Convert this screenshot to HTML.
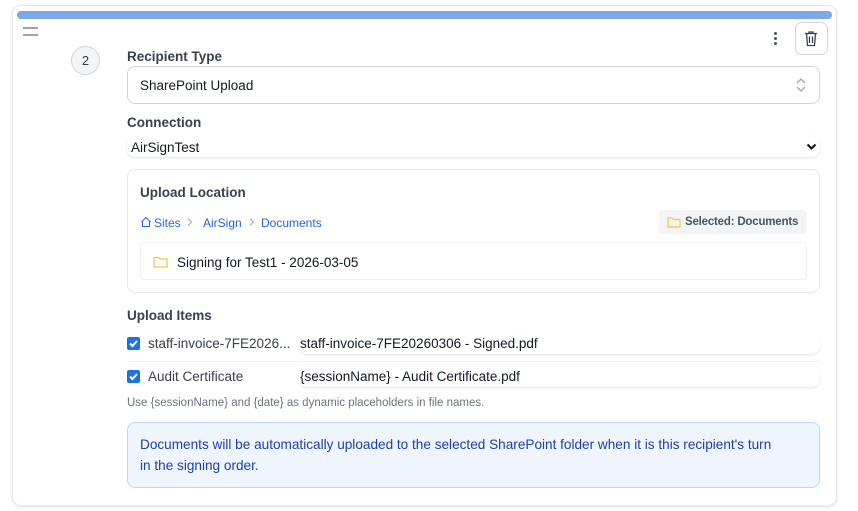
<!DOCTYPE html>
<html><head><meta charset="utf-8"><style>
*{box-sizing:border-box;margin:0;padding:0}
body{width:858px;height:511px;background:#fff;font-family:"Liberation Sans",sans-serif;color:#1f2937;position:relative;overflow:hidden}
.a{position:absolute;white-space:nowrap}
.lbl{font-size:13.5px;font-weight:bold;color:#374151}
.t{font-size:13.5px;color:#111827}
</style></head><body>
<div class="a" style="left:12px;top:5px;width:825px;height:501px;border:1px solid #e5e7eb;border-radius:9px;box-shadow:0 1px 3px rgba(0,0,0,.12)"></div>
<div class="a" style="left:17px;top:11px;width:815px;height:8px;background:#7aaae8;border-radius:4px"></div>
<div class="a" style="left:23px;top:27px;width:15px;height:2px;background:#9ca3af"></div>
<div class="a" style="left:23px;top:34px;width:15px;height:2px;background:#9ca3af"></div>
<div class="a" style="left:71px;top:46px;width:29px;height:29px;border:1px solid #d1d5db;border-radius:50%;background:#f3f4f6;font-size:13px;line-height:27px;text-align:center;color:#374151">2</div>
<div class="a" style="left:774px;top:32px;width:3px;height:3px;background:#4b5563;border-radius:50%;box-shadow:0 5px 0 #4b5563,0 10px 0 #4b5563"></div>
<div class="a" style="left:795px;top:22px;width:33px;height:33px;border:1px solid #d1d5db;border-radius:7px"></div>
<svg class="a" style="left:803px;top:30px" width="16" height="17" viewBox="0 0 16 17" fill="none" stroke="#374151" stroke-width="1.3"><path d="M2 3.5h12M6 3.5V2h4v1.5M3.5 3.5l1 12h7l1-12M6.5 6.5v6.5M9.5 6.5v6.5"/></svg>
<div class="a lbl" style="left:127px;top:49px">Recipient Type</div>
<div class="a" style="left:127px;top:66px;width:693px;height:38px;border:1px solid #d1d5db;border-radius:8px"></div>
<div class="a t" style="left:140px;top:78px">SharePoint Upload</div>
<svg class="a" style="left:795px;top:77px" width="12" height="16" viewBox="0 0 12 16" fill="none" stroke="#9ca3af" stroke-width="1.3"><path d="M2 6l4-4 4 4M2 10l4 4 4-4"/></svg>
<div class="a lbl" style="left:127px;top:115px">Connection</div>
<div class="a" style="left:127px;top:136px;width:693px;height:21px;border-radius:8px;box-shadow:0 1px 2px rgba(0,0,0,.12)"></div>
<div class="a t" style="left:131px;top:140px">AirSignTest</div>
<svg class="a" style="left:806px;top:142px" width="11" height="9" viewBox="0 0 11 9" fill="none" stroke="#111" stroke-width="2"><path d="M1.5 2.5l4 4 4-4"/></svg>
<div class="a" style="left:127px;top:169px;width:693px;height:124px;border:1px solid #e5e7eb;border-radius:8px"></div>
<div class="a lbl" style="left:140px;top:185px">Upload Location</div>
<svg class="a" style="left:140px;top:216px" width="12" height="12" viewBox="0 0 12 12" fill="none" stroke="#2563eb" stroke-width="1"><path d="M1.5 6L6 1.5 10.5 6M2.5 5v5.5h7V5"/></svg>
<div class="a" style="left:154px;top:216px;font-size:12px;color:#2563eb">Sites</div>
<svg class="a" style="left:186px;top:217px" width="7" height="10" viewBox="0 0 7 10" fill="none" stroke="#9ca3af" stroke-width="1"><path d="M2 1.5l3.5 3.5L2 8.5"/></svg>
<div class="a" style="left:203px;top:216px;font-size:12px;color:#2563eb">AirSign</div>
<svg class="a" style="left:248px;top:217px" width="7" height="10" viewBox="0 0 7 10" fill="none" stroke="#9ca3af" stroke-width="1"><path d="M2 1.5l3.5 3.5L2 8.5"/></svg>
<div class="a" style="left:261px;top:216px;font-size:12px;color:#2563eb">Documents</div>
<div class="a" style="left:659px;top:210px;width:148px;height:24px;background:#f3f4f6;border-radius:4px"></div>
<svg class="a" style="left:667px;top:216px" width="14" height="12" viewBox="0 0 14 12" fill="none" stroke="#f5c542" stroke-width="1.2"><path d="M1 2h4l1.5 1.5H13V11H1z"/></svg>
<div class="a" style="left:685px;top:216px;font-size:11.5px;font-weight:bold;color:#4b5563;letter-spacing:-0.2px">Selected: Documents</div>
<div class="a" style="left:140px;top:242px;width:667px;height:38px;border:1px solid #eef0f2;border-radius:4px"></div>
<svg class="a" style="left:153px;top:256px" width="15" height="12" viewBox="0 0 15 12" fill="none" stroke="#f5c542" stroke-width="1.2"><path d="M1 1.5h4.5l1.5 1.5H14V11H1z"/></svg>
<div class="a t" style="left:177px;top:255px">Signing for Test1 - 2026-03-05</div>
<div class="a lbl" style="left:127px;top:308px">Upload Items</div>
<div class="a" style="left:127px;top:337px;width:13px;height:13px;background:#1a73e8;border-radius:2px"></div>
<svg class="a" style="left:128px;top:338px" width="11" height="11" viewBox="0 0 11 11" fill="none" stroke="#fff" stroke-width="2"><path d="M2 5.5l2.5 2.5 4.5-5"/></svg>
<div class="a" style="left:148px;top:336px;font-size:13.5px;color:#374151">staff-invoice-7FE2026...</div>
<div class="a" style="left:299px;top:333px;width:521px;height:21px;border-radius:8px;box-shadow:0 1px 2px rgba(0,0,0,.12)"></div>
<div class="a t" style="left:300px;top:336px">staff-invoice-7FE20260306 - Signed.pdf</div>
<div class="a" style="left:127px;top:361px;width:693px;height:1px;background:#f0f1f3"></div>
<div class="a" style="left:127px;top:370px;width:13px;height:13px;background:#1a73e8;border-radius:2px"></div>
<svg class="a" style="left:128px;top:371px" width="11" height="11" viewBox="0 0 11 11" fill="none" stroke="#fff" stroke-width="2"><path d="M2 5.5l2.5 2.5 4.5-5"/></svg>
<div class="a" style="left:148px;top:369px;font-size:13.5px;color:#374151">Audit Certificate</div>
<div class="a" style="left:299px;top:366px;width:521px;height:21px;border-radius:8px;box-shadow:0 1px 2px rgba(0,0,0,.12)"></div>
<div class="a t" style="left:300px;top:369px">{sessionName} - Audit Certificate.pdf</div>
<div class="a" style="left:127px;top:397px;font-size:11.5px;color:#6b7280">Use {sessionName} and {date} as dynamic placeholders in file names.</div>
<div class="a" style="left:127px;top:422px;width:693px;height:66px;background:#eef5fe;border:1px solid #bfd7f7;border-radius:8px"></div>
<div class="a" style="left:140px;top:437px;font-size:13.6px;color:#1e40af">Documents will be automatically uploaded to the selected SharePoint folder when it is this recipient's turn</div>
<div class="a" style="left:140px;top:458px;font-size:13.6px;color:#1e40af">in the signing order.</div>
</body></html>
